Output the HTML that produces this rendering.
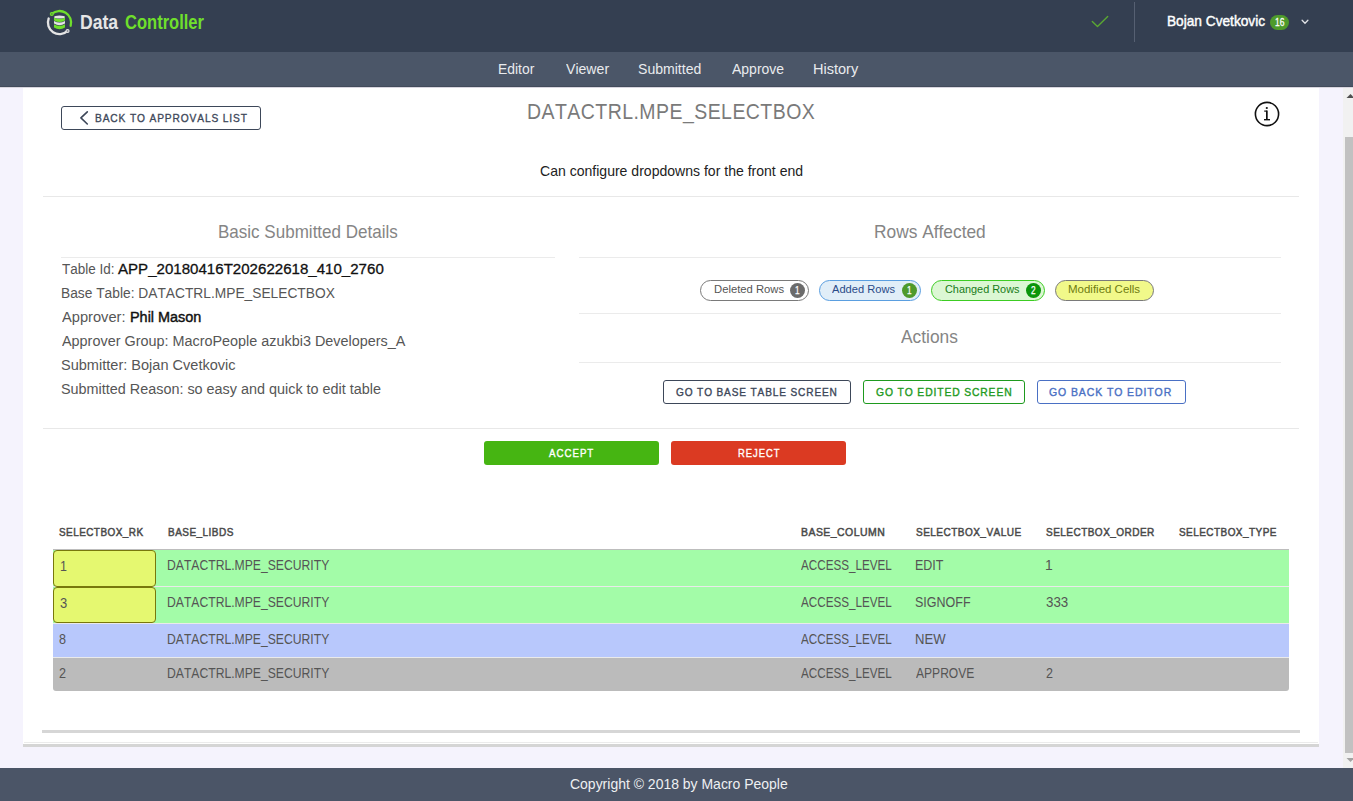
<!DOCTYPE html>
<html><head><meta charset="utf-8">
<style>
*{box-sizing:border-box;margin:0;padding:0}
html,body{width:1353px;height:801px;overflow:hidden;font-family:"Liberation Sans",sans-serif;background:#f5f3fd;position:relative}
.abs{position:absolute}
.t{position:absolute;white-space:nowrap;line-height:1;transform-origin:0 0;font-kerning:none}
</style></head><body>
<div class="abs" style="left:0px;top:0px;width:1353px;height:52px;background:#343f51"></div>
<div class="abs" style="left:0px;top:52px;width:1353px;height:35px;background:#4b5668"></div>
<div class="abs" style="left:0px;top:86px;width:1353px;height:1px;background:#424b5b"></div>
<div class="abs" style="left:0px;top:87px;width:1353px;height:1px;background:rgba(0,0,0,0.12)"></div>
<svg class="abs" style="left:44px;top:7px" width="32" height="32" viewBox="0 0 32 32">
<path d="M4.65 11.48 A11.6 11.6 0 0 0 23.56 23.94" fill="none" stroke="#e4e4e4" stroke-width="2.3" stroke-linecap="round"/>
<circle cx="23.56" cy="23.94" r="1.5" fill="#8a8f96" stroke="#e4e4e4" stroke-width="1.1"/>
<path d="M7.79 6.94 A11.6 11.6 0 0 1 26.66 18.76" fill="none" stroke="#6fdf2c" stroke-width="2.3" stroke-linecap="round"/>
<circle cx="7.79" cy="6.94" r="1.5" fill="#5a9a3a" stroke="#6fdf2c" stroke-width="1.1"/>
<ellipse cx="15.5" cy="10.0" rx="5.5" ry="1.6" fill="#e4e4e4"/>
<path d="M10 10.6 Q15.5 13.6 21 10.6 V13.4 Q15.5 16.6 10 13.4Z" fill="#6fdf2c"/>
<path d="M10 14.0 Q15.5 17.0 21 14.0 V16.6 Q15.5 19.8 10 16.6Z" fill="#e4e4e4"/>
<path d="M10 17.2 Q15.5 20.4 21 17.2 V20.6 Q15.5 23.8 10 20.6Z" fill="#6fdf2c"/>
</svg>
<div class="t" style="left:80.20px;top:13px;font-size:19.75px;font-weight:bold;color:#e6e6e6;transform:scaleX(0.8916);">Data</div>
<div class="t" style="left:125.15px;top:13px;font-size:19.75px;font-weight:bold;color:#6fdf2c;transform:scaleX(0.8368);">Controller</div>
<div class="t" style="left:498.15px;top:62px;font-size:14.75px;color:#e9ebee;transform:scaleX(0.9429);">Editor</div>
<div class="t" style="left:565.60px;top:62px;font-size:14.75px;color:#e9ebee;transform:scaleX(0.9556);">Viewer</div>
<div class="t" style="left:637.80px;top:62px;font-size:14.75px;color:#e9ebee;transform:scaleX(0.9534);">Submitted</div>
<div class="t" style="left:731.60px;top:62px;font-size:14.75px;color:#e9ebee;transform:scaleX(0.9482);">Approve</div>
<div class="t" style="left:813.20px;top:62px;font-size:14.75px;color:#e9ebee;transform:scaleX(0.9853);">History</div>
<svg class="abs" style="left:1090px;top:14px" width="20" height="16" viewBox="0 0 20 16"><path d="M2.3 7.4 L7.5 12.6 L17.7 2.4" fill="none" stroke="#5aa832" stroke-width="1.35" stroke-linecap="round" stroke-linejoin="round"/></svg>
<div class="abs" style="left:1134px;top:2px;width:1px;height:40px;background:#566072"></div>
<div class="t" style="left:1167.40px;top:13px;font-size:15.0px;color:#ffffff;transform:scaleX(0.9117);-webkit-text-stroke:0.45px #fff;">Bojan Cvetkovic</div>
<div class="abs" style="left:1270px;top:15px;width:19px;height:15px;background:#4e9b2b;border-radius:8px"></div>
<div class="t" style="left:1274.80px;top:17px;font-size:11.0px;color:#ffffff;transform:scaleX(0.7699);-webkit-text-stroke:0.3px #fff;">16</div>
<svg class="abs" style="left:1300px;top:18px" width="10" height="8" viewBox="0 0 10 8"><path d="M2.1 2.3 L5 5.3 L7.9 2.3" fill="none" stroke="#e0e2e6" stroke-width="1.3" stroke-linecap="round"/></svg>
<div class="abs" style="left:23px;top:88px;width:1296px;height:656px;background:#ffffff"></div>
<div class="abs" style="left:23px;top:744px;width:1296px;height:3px;background:#d5d5d5"></div>
<div class="abs" style="left:24px;top:742px;width:1294px;height:1px;background:#ebebeb"></div>
<div class="abs" style="left:1343px;top:88px;width:10px;height:680px;background:#f1f1f1"></div>
<div class="abs" style="left:1345px;top:137px;width:8px;height:616px;background:#c1c1c1"></div>
<svg class="abs" style="left:1345px;top:92px" width="8" height="8" viewBox="0 0 8 8"><path d="M1.5 6 L5.5 2 L9.5 6Z" fill="#505050"/></svg>
<svg class="abs" style="left:1345px;top:756px" width="8" height="8" viewBox="0 0 8 8"><path d="M1.5 2 L5.5 6 L9.5 2Z" fill="#a3a3a3"/></svg>
<div class="abs" style="left:0px;top:768px;width:1353px;height:33px;background:#4b5567"></div>
<div class="t" style="left:569.80px;top:777px;font-size:14.5px;color:#eef0f2;transform:scaleX(0.9637);">Copyright © 2018 by Macro People</div>
<div class="abs" style="left:61px;top:106px;width:200px;height:24px;border:1px solid #3d4759;border-radius:3px"></div>
<svg class="abs" style="left:78px;top:110px" width="12" height="16" viewBox="0 0 12 16"><path d="M9.3 1.8 L2.9 7.9 L9.3 14" fill="none" stroke="#3d4759" stroke-width="1.6" stroke-linecap="round" stroke-linejoin="round"/></svg>
<div class="t" style="left:94.80px;top:112px;font-size:11.75px;color:#3d4759;transform:scaleX(0.8677);letter-spacing:1px;-webkit-text-stroke:0.35px #3d4759;">BACK TO APPROVALS LIST</div>
<div class="t" style="left:527.00px;top:102px;font-size:21.5px;color:#7a7a7a;transform:scaleX(0.9062);letter-spacing:0.5px;">DATACTRL.MPE_SELECTBOX</div>
<svg class="abs" style="left:1253px;top:100px" width="28" height="28" viewBox="0 0 28 28"><circle cx="14" cy="14" r="11.6" fill="none" stroke="#111" stroke-width="1.6"/>
<circle cx="13.8" cy="8.0" r="1.1" fill="#111"/><rect x="13" y="10.5" width="1.7" height="9.4" fill="#111"/><rect x="11" y="19" width="6" height="1.4" fill="#111"/><rect x="11.2" y="10.5" width="2.6" height="1.2" fill="#111"/></svg>
<div class="t" style="left:539.60px;top:164px;font-size:14.5px;color:#222222;transform:scaleX(0.9685);">Can configure dropdowns for the front end</div>
<div class="abs" style="left:43px;top:196px;width:1256px;height:1px;background:#e8e8e8"></div>
<div class="t" style="left:218.20px;top:223px;font-size:18.5px;color:#858585;transform:scaleX(0.9204);">Basic Submitted Details</div>
<div class="abs" style="left:61px;top:257px;width:494px;height:1px;background:#ebebeb"></div>
<div class="t" style="left:874.25px;top:222px;font-size:19.0px;color:#858585;transform:scaleX(0.9123);">Rows Affected</div>
<div class="abs" style="left:579px;top:257px;width:702px;height:1px;background:#ebebeb"></div>
<div class="t" style="left:61.55px;top:261px;font-size:15.5px;color:#565656;transform:scaleX(0.8696);">Table Id:</div>
<div class="t" style="left:118.40px;top:261px;font-size:15.5px;color:#111111;transform:scaleX(0.9727);-webkit-text-stroke:0.3px #111;">APP_20180416T202622618_410_2760</div>
<div class="t" style="left:60.55px;top:285px;font-size:15.5px;color:#565656;transform:scaleX(0.8880);">Base Table: DATACTRL.MPE_SELECTBOX</div>
<div class="t" style="left:61.55px;top:309px;font-size:15.5px;color:#565656;transform:scaleX(0.9458);">Approver:</div>
<div class="t" style="left:129.55px;top:309px;font-size:15.5px;color:#111111;transform:scaleX(0.9309);-webkit-text-stroke:0.45px #111;">Phil Mason</div>
<div class="t" style="left:61.55px;top:333px;font-size:15.5px;color:#565656;transform:scaleX(0.9291);">Approver Group: MacroPeople azukbi3 Developers_A</div>
<div class="t" style="left:60.55px;top:357px;font-size:15.5px;color:#565656;transform:scaleX(0.9381);">Submitter: Bojan Cvetkovic</div>
<div class="t" style="left:60.55px;top:381px;font-size:15.5px;color:#565656;transform:scaleX(0.9285);">Submitted Reason: so easy and quick to edit table</div>
<div class="abs" style="left:700px;top:280px;width:109px;height:21px;background:#ffffff;border:1px solid #7a7a7a;border-radius:11px"></div>
<div class="t" style="left:713.60px;top:283px;font-size:11.75px;color:#555555;transform:scaleX(0.9584);">Deleted Rows</div>
<div class="abs" style="left:790px;top:283px;width:15px;height:15px;background:#6b6b6b;border-radius:50%"></div>
<div class="t" style="left:795.30px;top:285px;font-size:10.5px;color:#ffffff;transform:scaleX(0.7894);-webkit-text-stroke:0.25px #fff;">1</div>
<div class="abs" style="left:819px;top:280px;width:102px;height:21px;background:#e1eef8;border:1px solid #5a9ee0;border-radius:11px"></div>
<div class="t" style="left:832.30px;top:283px;font-size:11.75px;color:#2a4a88;transform:scaleX(0.9456);">Added Rows</div>
<div class="abs" style="left:902px;top:283px;width:15px;height:15px;background:#4f9a2c;border-radius:50%"></div>
<div class="t" style="left:907.30px;top:285px;font-size:10.5px;color:#ffffff;transform:scaleX(0.7894);-webkit-text-stroke:0.25px #fff;">1</div>
<div class="abs" style="left:931px;top:280px;width:114px;height:21px;background:#dcf7d4;border:1px solid #3ccc22;border-radius:11px"></div>
<div class="t" style="left:944.50px;top:283px;font-size:11.75px;color:#187c18;transform:scaleX(0.9270);">Changed Rows</div>
<div class="abs" style="left:1026px;top:283px;width:15px;height:15px;background:#0a950a;border-radius:50%"></div>
<div class="t" style="left:1031.30px;top:285px;font-size:10.5px;color:#ffffff;transform:scaleX(0.7894);-webkit-text-stroke:0.25px #fff;">2</div>
<div class="abs" style="left:1055px;top:280px;width:99px;height:21px;background:#f1f98a;border:1px solid #7a7a7a;border-radius:11px"></div>
<div class="t" style="left:1068.20px;top:283px;font-size:11.75px;color:#6e7c10;transform:scaleX(0.9771);">Modified Cells</div>
<div class="abs" style="left:579px;top:313px;width:702px;height:1px;background:#ebebeb"></div>
<div class="t" style="left:901.45px;top:327px;font-size:19.0px;color:#858585;transform:scaleX(0.9130);">Actions</div>
<div class="abs" style="left:579px;top:362px;width:702px;height:1px;background:#ebebeb"></div>
<div class="abs" style="left:663px;top:380px;width:188px;height:24px;border:1px solid #3d4759;border-radius:3px"></div>
<div class="t" style="left:675.65px;top:386px;font-size:11.75px;color:#3d4759;transform:scaleX(0.8596);letter-spacing:1px;-webkit-text-stroke:0.4px #3d4759;">GO TO BASE TABLE SCREEN</div>
<div class="abs" style="left:863px;top:380px;width:162px;height:24px;border:1px solid #1e9a1e;border-radius:3px"></div>
<div class="t" style="left:875.60px;top:386px;font-size:11.75px;color:#1e9a1e;transform:scaleX(0.8779);letter-spacing:1px;-webkit-text-stroke:0.4px #1e9a1e;">GO TO EDITED SCREEN</div>
<div class="abs" style="left:1037px;top:380px;width:149px;height:24px;border:1px solid #4a70c4;border-radius:3px"></div>
<div class="t" style="left:1049.45px;top:386px;font-size:11.75px;color:#4a70c4;transform:scaleX(0.8935);letter-spacing:1px;-webkit-text-stroke:0.4px #4a70c4;">GO BACK TO EDITOR</div>
<div class="abs" style="left:43px;top:428px;width:1256px;height:1px;background:#e8e8e8"></div>
<div class="abs" style="left:484px;top:441px;width:175px;height:24px;background:#46b512;border-radius:3px"></div>
<div class="t" style="left:549.25px;top:447px;font-size:11.75px;color:#ffffff;transform:scaleX(0.8248);letter-spacing:1.2px;-webkit-text-stroke:0.4px #fff;">ACCEPT</div>
<div class="abs" style="left:671px;top:441px;width:175px;height:24px;background:#db3a22;border-radius:3px"></div>
<div class="t" style="left:737.60px;top:447px;font-size:11.75px;color:#ffffff;transform:scaleX(0.8007);letter-spacing:1.2px;-webkit-text-stroke:0.4px #fff;">REJECT</div>
<div class="t" style="left:59.00px;top:527px;font-size:11.25px;color:#4a4a4a;transform:scaleX(0.8853);letter-spacing:0.5px;-webkit-text-stroke:0.5px #4a4a4a;">SELECTBOX_RK</div>
<div class="t" style="left:168.40px;top:527px;font-size:11.25px;color:#4a4a4a;transform:scaleX(0.8916);letter-spacing:0.5px;-webkit-text-stroke:0.5px #4a4a4a;">BASE_LIBDS</div>
<div class="t" style="left:801.20px;top:527px;font-size:11.25px;color:#4a4a4a;transform:scaleX(0.9300);letter-spacing:0.5px;-webkit-text-stroke:0.5px #4a4a4a;">BASE_COLUMN</div>
<div class="t" style="left:915.80px;top:527px;font-size:11.25px;color:#4a4a4a;transform:scaleX(0.8934);letter-spacing:0.5px;-webkit-text-stroke:0.5px #4a4a4a;">SELECTBOX_VALUE</div>
<div class="t" style="left:1046.20px;top:527px;font-size:11.25px;color:#4a4a4a;transform:scaleX(0.8924);letter-spacing:0.5px;-webkit-text-stroke:0.5px #4a4a4a;">SELECTBOX_ORDER</div>
<div class="t" style="left:1178.65px;top:527px;font-size:11.25px;color:#4a4a4a;transform:scaleX(0.8882);letter-spacing:0.5px;-webkit-text-stroke:0.5px #4a4a4a;">SELECTBOX_TYPE</div>
<div class="abs" style="left:53px;top:549px;width:1236px;height:1px;background:#bdbdbd"></div>
<div class="abs" style="left:53px;top:550px;width:1236px;height:36px;background:#a3fca8"></div>
<div class="abs" style="left:53px;top:586px;width:1236px;height:1px;background:#eaeaea"></div>
<div class="abs" style="left:53px;top:587px;width:1236px;height:36px;background:#a3fca8"></div>
<div class="abs" style="left:53px;top:623px;width:1236px;height:1px;background:#eaeaea"></div>
<div class="abs" style="left:53px;top:624px;width:1236px;height:33px;background:#b8c8fc"></div>
<div class="abs" style="left:53px;top:657px;width:1236px;height:1px;background:#eaeaea"></div>
<div class="abs" style="left:53px;top:658px;width:1236px;height:33px;background:#bbbbbb;border-radius:0 0 3px 3px"></div>
<div class="abs" style="left:53px;top:550px;width:103px;height:37px;background:#e5f870;border:1px solid #78780c;border-radius:4px"></div>
<div class="abs" style="left:53px;top:587px;width:103px;height:36px;background:#e5f870;border:1px solid #78780c;border-radius:4px"></div>
<div class="t" style="left:60.15px;top:559px;font-size:14.5px;color:#555555;transform:scaleX(0.8574);">1</div>
<div class="t" style="left:167.40px;top:558px;font-size:14.5px;color:#555555;transform:scaleX(0.8392);">DATACTRL.MPE_SECURITY</div>
<div class="t" style="left:801.35px;top:558px;font-size:14.5px;color:#555555;transform:scaleX(0.8044);">ACCESS_LEVEL</div>
<div class="t" style="left:915.40px;top:558px;font-size:14.5px;color:#555555;transform:scaleX(0.8606);">EDIT</div>
<div class="t" style="left:1045.25px;top:558px;font-size:14.5px;color:#555555;transform:scaleX(0.9568);">1</div>
<div class="t" style="left:60.15px;top:596px;font-size:14.5px;color:#555555;transform:scaleX(0.8947);">3</div>
<div class="t" style="left:167.40px;top:595px;font-size:14.5px;color:#555555;transform:scaleX(0.8392);">DATACTRL.MPE_SECURITY</div>
<div class="t" style="left:801.35px;top:595px;font-size:14.5px;color:#555555;transform:scaleX(0.8044);">ACCESS_LEVEL</div>
<div class="t" style="left:915.40px;top:595px;font-size:14.5px;color:#555555;transform:scaleX(0.8619);">SIGNOFF</div>
<div class="t" style="left:1046.25px;top:595px;font-size:14.5px;color:#555555;transform:scaleX(0.9209);">333</div>
<div class="t" style="left:59.20px;top:632px;font-size:14.5px;color:#555555;transform:scaleX(0.8698);">8</div>
<div class="t" style="left:167.40px;top:632px;font-size:14.5px;color:#555555;transform:scaleX(0.8392);">DATACTRL.MPE_SECURITY</div>
<div class="t" style="left:801.35px;top:632px;font-size:14.5px;color:#555555;transform:scaleX(0.8044);">ACCESS_LEVEL</div>
<div class="t" style="left:915.40px;top:632px;font-size:14.5px;color:#555555;transform:scaleX(0.9053);">NEW</div>
<div class="t" style="left:59.20px;top:666px;font-size:14.5px;color:#555555;transform:scaleX(0.8698);">2</div>
<div class="t" style="left:167.40px;top:666px;font-size:14.5px;color:#555555;transform:scaleX(0.8392);">DATACTRL.MPE_SECURITY</div>
<div class="t" style="left:801.35px;top:666px;font-size:14.5px;color:#555555;transform:scaleX(0.8044);">ACCESS_LEVEL</div>
<div class="t" style="left:916.40px;top:666px;font-size:14.5px;color:#555555;transform:scaleX(0.8323);">APPROVE</div>
<div class="t" style="left:1046.25px;top:666px;font-size:14.5px;color:#555555;transform:scaleX(0.8636);">2</div>
<div class="abs" style="left:42px;top:730px;width:1258px;height:3px;background:#d6d6d6"></div>
</body></html>
